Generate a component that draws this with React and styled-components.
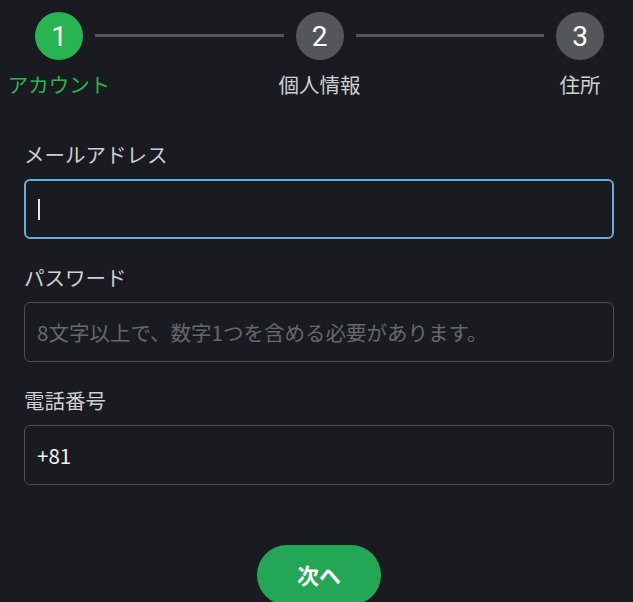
import React from "react";
import styled, { createGlobalStyle } from "styled-components";

const GlobalStyle = createGlobalStyle`
  html, body {
    margin: 0;
    padding: 0;
    background: #1a1b20;
  }
  body {
    font-family: "Noto Sans CJK JP", "Noto Sans", sans-serif;
    color: #d4d4d6;
  }
`;

const Page = styled.div`
  min-height: 602px;
  padding: 12px 19px 0 24px;
  box-sizing: border-box;
`;

const Stepper = styled.div`
  display: flex;
  align-items: flex-start;
  padding: 0 10px 0 11px;
`;

const Step = styled.div`
  width: 48px;
  flex: none;
  display: flex;
  flex-direction: column;
  align-items: center;
`;

const Circle = styled.div`
  width: 48px;
  height: 48px;
  border-radius: 50%;
  background: ${({ $active }) => ($active ? "#26b550" : "#55565a")};
  color: #ffffff;
  display: flex;
  align-items: center;
  justify-content: center;
  font-family: "Roboto", "Liberation Sans", sans-serif;
  font-size: 28px;
`;

const StepLabel = styled.div`
  margin-top: 11px;
  white-space: nowrap;
  font-size: 20.5px;
  line-height: 26px;
  color: ${({ $active }) => ($active ? "#27b552" : "#d0d0d2")};
`;

const Connector = styled.div`
  flex: 1;
  height: 3px;
  margin: 22px 12px 0;
  background: #55565a;
`;

const Form = styled.form`
  margin-top: 44px;
  display: flex;
  flex-direction: column;
  gap: 25px;
`;

const Field = styled.div`
  display: flex;
  flex-direction: column;
  gap: 12px;
`;

const FieldLabel = styled.label`
  font-size: 20.5px;
  line-height: 26px;
  color: #cfcfd1;
`;

const Input = styled.input`
  height: 60px;
  box-sizing: border-box;
  border-radius: 6px;
  border: 1.5px solid #4c4d52;
  background: #1a1b20;
  padding: 0 12px;
  font-family: "Noto Sans CJK JP", "Noto Sans", sans-serif;
  font-size: 20.5px;
  color: #f2f2f2;
  outline: none;
  &::placeholder {
    color: #67686c;
  }
`;

const Caret = styled.span`
  display: inline-block;
  width: 2px;
  height: 21px;
  background: #e8e8e8;
`;

const FocusBox = styled.div`
  height: 60px;
  box-sizing: border-box;
  border-radius: 6px;
  border: 2px solid #62acdf;
  display: flex;
  align-items: center;
  padding-left: 12px;
`;

const Actions = styled.div`
  display: flex;
  justify-content: center;
  margin-top: 60px;
`;

const NextButton = styled.button`
  width: 124px;
  height: 60px;
  border: none;
  border-radius: 30px;
  background: #23a757;
  color: #ffffff;
  font-family: "Noto Sans CJK JP", "Noto Sans", sans-serif;
  font-weight: 700;
  font-size: 22px;
  padding-bottom: 4px;
`;

const steps = ["アカウント", "個人情報", "住所"];

export default function App() {
  return (
    <>
      <GlobalStyle />
      <Page>
        <Stepper>
          {steps.map((s, i) => (
            <React.Fragment key={s}>
              {i > 0 && <Connector />}
              <Step>
                <Circle $active={i === 0}>{i + 1}</Circle>
                <StepLabel $active={i === 0}>{s}</StepLabel>
              </Step>
            </React.Fragment>
          ))}
        </Stepper>
        <Form onSubmit={(e) => e.preventDefault()}>
          <Field>
            <FieldLabel>メールアドレス</FieldLabel>
            <FocusBox>
              <Caret />
            </FocusBox>
          </Field>
          <Field>
            <FieldLabel>パスワード</FieldLabel>
            <Input type="password" placeholder="8文字以上で、数字1つを含める必要があります。" />
          </Field>
          <Field>
            <FieldLabel>電話番号</FieldLabel>
            <Input defaultValue="+81" />
          </Field>
        </Form>
        <Actions>
          <NextButton type="button">次へ</NextButton>
        </Actions>
      </Page>
    </>
  );
}
